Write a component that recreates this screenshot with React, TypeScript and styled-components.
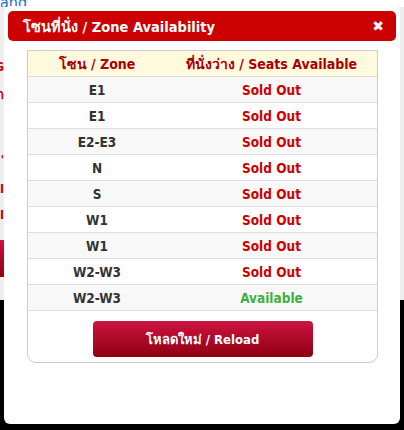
import React from "react";
import styled, { createGlobalStyle } from "styled-components";

const Global = createGlobalStyle`
  html, body { margin: 0; padding: 0; background: #000; }
  body { font-family: "DejaVu Sans Condensed", "DejaVu Sans", "Noto Sans", sans-serif; }
`;

const Page = styled.div`
  position: relative;
  width: 404px;
  height: 430px;
  overflow: hidden;
  background: #000;
`;

const PageTop = styled.div`
  height: 300px;
  background: #eeeeee;
  display: flex;
  flex-direction: column;
  overflow: hidden;
`;

const PageLink = styled.div`
  color: #1a6fc4;
  font-size: 16px;
  line-height: 6px;
  height: 7px;
  overflow: hidden;
  background: #fff;
  white-space: nowrap;
`;

const PageMark = styled.div<{ $top: number }>`
  margin-top: ${(p) => p.$top}px;
  width: 4px;
  height: 10px;
  overflow: hidden;
  color: #cc0000;
  font-size: 13px;
  line-height: 10px;
  font-weight: bold;
  white-space: nowrap;
  direction: rtl;
`;

const PageButton = styled.div`
  width: 4px;
  height: 37px;
  margin-top: 20px;
  background: linear-gradient(#d0103e, #8f0010);
`;

const Modal = styled.div`
  position: absolute;
  top: 6px;
  left: 4px;
  width: 396px;
  height: 418px;
  background: #fff;
  border-radius: 6px;
  padding: 5px 4px;
  box-sizing: border-box;
  display: flex;
  flex-direction: column;
  gap: 9px;
`;

const Header = styled.div`
  height: 30px;
  background: #cc0000;
  border-radius: 5px;
  display: flex;
  align-items: center;
  justify-content: space-between;
  padding: 0 12px 0 15px;
  color: #fff;
  font-weight: bold;
  font-size: 14.5px;
`;

const Close = styled.span`
  font-size: 14px;
  line-height: 1;
  font-family: "DejaVu Sans", sans-serif;
`;

const Box = styled.div`
  margin: 0 18px 0 19px;
  border: 1px solid #cccccc;
  border-radius: 0 0 9px 9px;
  overflow: hidden;
`;

const Row = styled.div<{ $bg: string; $size: number }>`
  display: grid;
  grid-template-columns: 138px 1fr;
  height: 25px;
  align-items: center;
  background: ${(p) => p.$bg};
  border-bottom: 1px solid #dddddd;
  font-size: ${(p) => p.$size}px;
  font-weight: bold;
`;

const Cell = styled.div<{ $color: string }>`
  text-align: center;
  color: ${(p) => p.$color};
  white-space: nowrap;
`;

const Footer = styled.div`
  display: flex;
  justify-content: center;
  padding: 10px 0 5px;
`;

const ReloadButton = styled.button`
  width: 220px;
  height: 36px;
  border: none;
  border-radius: 4px;
  background: linear-gradient(#cd1442, #8e000f);
  color: #fff;
  font-family: inherit;
  font-weight: bold;
  font-size: 13px;
  padding: 0;
`;

const rows: [string, boolean][] = [
  ["E1", false],
  ["E1", false],
  ["E2-E3", false],
  ["N", false],
  ["S", false],
  ["W1", false],
  ["W1", false],
  ["W2-W3", false],
  ["W2-W3", true],
];

export default function App() {
  return (
    <>
      <Global />
      <Page>
        <PageTop>
          <PageLink>and</PageLink>
          <PageMark $top={55}>G</PageMark>
          <PageMark $top={18}>ก</PageMark>
          <PageMark $top={55}>'</PageMark>
          <PageMark $top={19}>l</PageMark>
          <PageMark $top={16}>l</PageMark>
          <PageButton />
        </PageTop>
        <Modal>
          <Header>
            <span>โซนที่นั่ง / Zone Availability</span>
            <Close>✖</Close>
          </Header>
          <Box>
            <Row $bg="#fff9dd" $size={14}>
              <Cell $color="#a80000">โซน / Zone</Cell>
              <Cell $color="#a80000">ที่นั่งว่าง / Seats Available</Cell>
            </Row>
            {rows.map(([zone, avail], i) => (
              <Row key={i} $bg={i % 2 === 0 ? "#f8f8f8" : "#ffffff"} $size={13.5}>
                <Cell $color="#333333">{zone}</Cell>
                <Cell $color={avail ? "#3db03d" : "#cc0000"}>
                  {avail ? "Available" : "Sold Out"}
                </Cell>
              </Row>
            ))}
            <Footer>
              <ReloadButton>โหลดใหม่ / Reload</ReloadButton>
            </Footer>
          </Box>
        </Modal>
      </Page>
    </>
  );
}
